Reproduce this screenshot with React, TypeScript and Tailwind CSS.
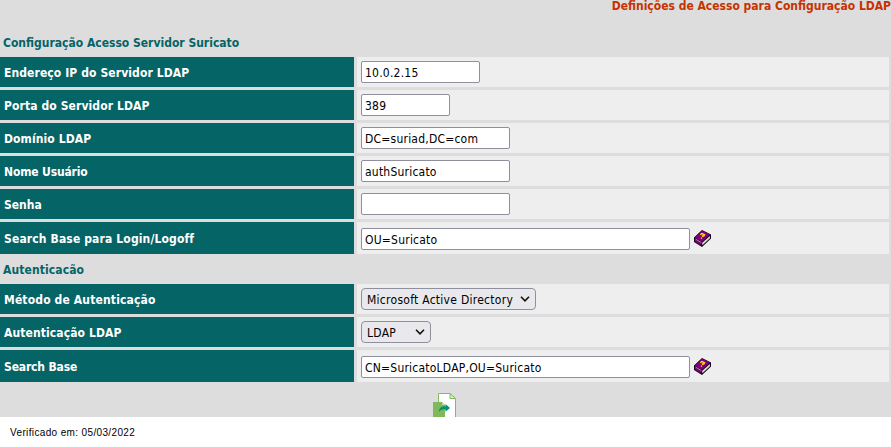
import type { ReactNode } from "react";

function BookIcon() {
  return (
    <svg width="17" height="17" viewBox="0 0 17 17" className="relative -top-px ml-1 shrink-0">
      <path d="M8 0L17 4.500V8.500L8 17 0 12V7.500z" fill="#140014" />
      <path d="M8.200 .8L15.800 4.600 8 11.800 1 7.700z" fill="#84007f" />
      <path d="M8.300 12.800L15.900 6V8.200L8.300 15.200z" fill="#f4f4f4" />
      <path d="M8.500 14L15.700 7.200" stroke="#999" strokeWidth=".5" />
      <path d="M.8 9.300L7.300 13v2.500L.8 11.500z" fill="#84007f" />
      <path d="M1.500 9.100L7.500 12.600" stroke="#ddd" strokeWidth=".7" />
      <path d="M6.300 4.700L8 3.500l2.500 1.200-.7 1.100-2 .5M7 7.900l1 .5" fill="none" stroke="#ffe800" strokeWidth="1.400" />
    </svg>
  );
}

function ExportIcon() {
  return (
    <svg width="23" height="24" viewBox="0 0 23 24">
      <path d="M5.500 25V.5H17L22.500 6v19z" fill="#fff" stroke="#80bd5b" />
      <path d="M17 .5V5.500h5.500z" fill="#d9edce" stroke="#80bd5b" />
      <path d="M0 9h9l3 3v12H0z" fill="#80b95b" />
      <path d="M9 9v3h3z" fill="#bddbab" />
      <path d="M6 19c0-4.500 3-6 6.500-5.800V11L17 15l-4.500 3.700V16.500C9.500 16 7.500 17 6 19z" fill="#009273" />
    </svg>
  );
}

function Row({ label, spacing = "tracking-[0.1px]", tall, children }: { label: string; spacing?: string; tall?: boolean; children: ReactNode }) {
  return (
    <div className={`flex gap-[3px] ${tall ? "h-8" : "h-[30px]"}`}>
      <div className={`flex w-[354px] items-center bg-[#056466] pt-0.5 pl-1 text-[12px] font-bold text-white ${spacing}`}>{label}</div>
      <div className={`flex w-[532px] items-center bg-[#eee] pl-1 ${tall ? "pt-0.5" : ""}`}>{children}</div>
    </div>
  );
}

function Field({ value, width }: { value: string; width: string }) {
  return (
    <input
      defaultValue={value}
      className={`h-[22px] rounded-[2px] border border-[#8f8f9d] bg-white px-[3px] pt-0.5 text-[12px] tracking-[0.22px] text-black ${width}`}
    />
  );
}

function Choice({ value, width }: { value: string; width: string }) {
  return (
    <button
      className={`flex h-[22px] items-center justify-between rounded-[4px] border border-[#8f8f9d] bg-[#e9e9ed] pl-[5px] pr-[5px] text-[12px] text-black ${width}`}
    >
      <span className="pt-0.5 tracking-[0.27px] whitespace-nowrap">{value}</span>
      <svg width="10" height="6" viewBox="0 0 10 6" fill="none" stroke="#111" strokeWidth="1.6">
        <path d="M1 .8L5 4.800 9 .8" />
      </svg>
    </button>
  );
}

export default function App() {
  return (
    <div className="h-[447px] w-[891px] overflow-hidden bg-white font-['DejaVu_Sans_Condensed','DejaVu_Sans',sans-serif]">
      <div className="h-[417px] bg-[#ddd]">
        <div className="h-[35px] text-right text-[12px] leading-[12px] font-bold whitespace-nowrap text-[#c63300]">
          Definições de Acesso para Configuração LDAP
        </div>
        <h2 className="h-[22px] pl-[3px] text-[12px] leading-[16px] font-bold text-[#056466]">
          Configuração Acesso Servidor Suricato
        </h2>
        <div className="flex flex-col gap-[3px]">
          <Row label="Endereço IP do Servidor LDAP"><Field value="10.0.2.15" width="w-[119px]" /></Row>
          <Row label="Porta do Servidor LDAP"><Field value="389" width="w-[89px]" /></Row>
          <Row label="Domínio LDAP"><Field value="DC=suriad,DC=com" width="w-[149px]" /></Row>
          <Row label="Nome Usuário" spacing="tracking-[-0.15px]"><Field value="authSuricato" width="w-[149px]" /></Row>
          <Row label="Senha" spacing="tracking-normal"><Field value="" width="w-[149px]" /></Row>
          <Row label="Search Base para Login/Logoff" spacing="tracking-[0.14px]" tall>
            <Field value="OU=Suricato" width="w-[329px]" /><BookIcon />
          </Row>
        </div>
        <h2 className="flex h-[30px] items-center pt-0.5 pl-[3px] text-[12px] font-bold tracking-[0.1px] text-[#056466]">Autenticacão</h2>
        <div className="flex flex-col gap-[3px]">
          <Row label="Método de Autenticação" spacing="tracking-[0.15px]"><Choice value="Microsoft Active Directory" width="w-[175px]" /></Row>
          <Row label="Autenticação LDAP"><Choice value="LDAP" width="w-[70px]" /></Row>
          <Row label="Search Base" spacing="tracking-[-0.15px]" tall>
            <Field value="CN=SuricatoLDAP,OU=Suricato" width="w-[329px]" /><BookIcon />
          </Row>
        </div>
        <div className="flex justify-center pt-[11px] pr-[3px]"><ExportIcon /></div>
      </div>
      <div className="pt-[9px] pl-[10px] font-['Liberation_Sans',Arial,sans-serif] text-[10px] leading-[14px] tracking-[0.36px] text-black">
        Verificado em: 05/03/2022
      </div>
    </div>
  );
}
